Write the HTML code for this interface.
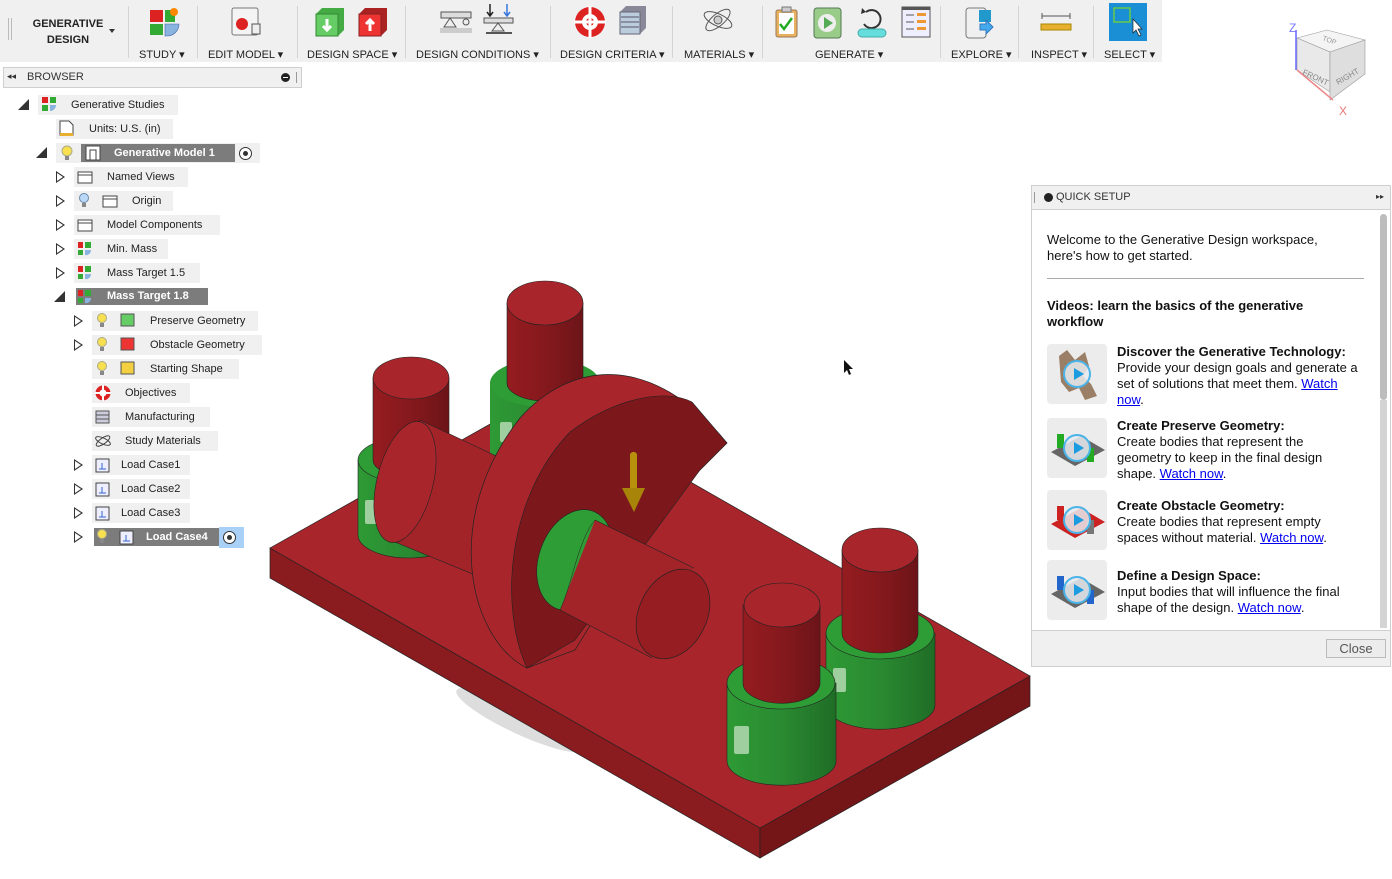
<!DOCTYPE html>
<html><head><meta charset="utf-8">
<style>
*{margin:0;padding:0;box-sizing:border-box}
body{width:1392px;height:879px;background:#fff;font-family:"Liberation Sans",sans-serif;position:relative;overflow:hidden;color:#222}
.abs{position:absolute}
#tb{left:0;top:0;width:1162px;height:62px;background:#f0f0f0}
.lbl{position:absolute;top:48px;font-size:11px;color:#222;white-space:nowrap}
.sep{position:absolute;top:6px;width:1px;height:52px;background:#d4d4d4}
.row{position:absolute;height:20px;background:#f0f0f0;font-size:11px;line-height:20px;color:#222;white-space:nowrap}
.sel{background:#7c7c7c;color:#fff;font-weight:bold}
.tri{position:absolute;width:0;height:0;border-top:6px solid transparent;border-bottom:6px solid transparent;border-left:9px solid #333}
.tri i{position:absolute;left:-8px;top:-4px;border-top:4px solid transparent;border-bottom:4px solid transparent;border-left:6px solid #fff}
.dn{position:absolute;width:0;height:0;border-left:11px solid transparent;border-bottom:11px solid #333}
#qs{left:1031px;top:185px;width:360px;height:482px;border:1px solid #cfcfcf;background:#fff}
#qs p{font-size:13px;line-height:16px;position:absolute;left:15px;color:#111}
a{color:#0000ee;text-decoration:underline}
.th{position:absolute;left:15px;width:60px;height:60px;background:#ececec;border-radius:4px}
.play{position:absolute;left:16px;top:16px;width:28px;height:28px;border-radius:50%;background:rgba(230,235,240,.85);border:2px solid #4ab3e8}
.play:after{content:"";position:absolute;left:9px;top:6px;border-top:6px solid transparent;border-bottom:6px solid transparent;border-left:10px solid #1b9be0}
</style></head><body>

<div id="tb" class="abs">
  <div class="abs" style="left:8px;top:18px;width:1px;height:22px;background:#bbb"></div>
  <div class="abs" style="left:11px;top:18px;width:1px;height:22px;background:#bbb"></div>
  <div class="abs" style="left:28px;top:16px;width:80px;text-align:center;font-size:11px;font-weight:bold;line-height:16px">GENERATIVE<br>DESIGN</div>
  <div class="abs" style="left:109px;top:29px;border-left:3px solid transparent;border-right:3px solid transparent;border-top:4px solid #333"></div>
  <div class="sep" style="left:128px"></div>
  <div class="sep" style="left:197px"></div><div class="sep" style="left:297px"></div><div class="sep" style="left:405px"></div>
  <div class="sep" style="left:550px"></div><div class="sep" style="left:672px"></div><div class="sep" style="left:762px"></div>
  <div class="sep" style="left:940px"></div><div class="sep" style="left:1018px"></div><div class="sep" style="left:1093px"></div>
  <div class="lbl" style="left:139px">STUDY ▾</div>
  <div class="lbl" style="left:208px">EDIT MODEL ▾</div>
  <div class="lbl" style="left:307px">DESIGN SPACE ▾</div>
  <div class="lbl" style="left:416px">DESIGN CONDITIONS ▾</div>
  <div class="lbl" style="left:560px">DESIGN CRITERIA ▾</div>
  <div class="lbl" style="left:684px">MATERIALS ▾</div>
  <div class="lbl" style="left:815px">GENERATE ▾</div>
  <div class="lbl" style="left:951px">EXPLORE ▾</div>
  <div class="lbl" style="left:1031px">INSPECT ▾</div>
  <div class="lbl" style="left:1104px">SELECT ▾</div>
  <svg class="abs" style="left:0;top:0" width="1162" height="44">
    <rect x="150" y="10" width="13" height="12" fill="#d22"/><rect x="150" y="24" width="13" height="11" fill="#3a3"/>
    <rect x="165" y="10" width="10" height="12" fill="#3a3"/><path d="M165 24h14a12 12 0 0 1-12 12h-2z" fill="#8ab4e0" stroke="#46a" stroke-width=".6"/>
    <circle cx="174" cy="12" r="4" fill="#f80"/>
    <rect x="232" y="8" width="26" height="27" rx="2" fill="#f4f4f4" stroke="#777"/><circle cx="242" cy="24" r="6" fill="#d22"/><rect x="252" y="24" width="8" height="10" fill="#eee" stroke="#555"/>
    <path d="M316 14l6-6h22v22l-6 6h-22z" fill="#4a4"/><rect x="316" y="14" width="22" height="22" fill="#6c6" stroke="#383"/><path d="M327 19v10m-4-3l4 4 4-4" stroke="#fff" stroke-width="3" fill="none"/>
    <path d="M359 14l6-6h22v22l-6 6h-22z" fill="#a22"/><rect x="359" y="14" width="22" height="22" fill="#e33" stroke="#822"/><path d="M370 31v-10m-4 3l4-4 4 4" stroke="#fff" stroke-width="3" fill="none"/>
    <rect x="441" y="12" width="30" height="6" fill="#ddd" stroke="#555"/><path d="M450 18l-6 9h12z" fill="#eee" stroke="#555"/><circle cx="466" cy="22" r="3" fill="#eee" stroke="#555"/><rect x="440" y="28" width="32" height="5" fill="#ccc"/>
    <path d="M490 4v12m-3-4l3 4 3-4" stroke="#222" stroke-width="1.5" fill="none"/><path d="M507 4v12m-3-4l3 4 3-4" stroke="#37d" stroke-width="1.5" fill="none"/>
    <rect x="484" y="18" width="29" height="5" fill="#ddd" stroke="#555"/><path d="M498 23l-6 8h12z" fill="#eee" stroke="#555"/><rect x="486" y="32" width="26" height="2" fill="#555"/>
    <circle cx="590" cy="22" r="15" fill="#d22"/><circle cx="590" cy="22" r="8" fill="#fff"/><circle cx="590" cy="22" r="4" fill="#d22"/>
    <path d="M590 6v32M574 22h32" stroke="#fff" stroke-width="3"/>
    <path d="M620 12l6-6h20v22l-6 6h-20z" fill="#889"/><rect x="620" y="12" width="20" height="22" fill="#bcd" stroke="#667"/><path d="M621 17h18M621 22h18M621 27h18" stroke="#556"/>
    <ellipse cx="718" cy="20" rx="15" ry="6" fill="none" stroke="#555" transform="rotate(25 718 20)"/><ellipse cx="718" cy="20" rx="15" ry="6" fill="none" stroke="#555" transform="rotate(-40 718 20)"/><circle cx="718" cy="20" r="4" fill="#ccc" stroke="#555"/>
    <rect x="776" y="10" width="21" height="27" rx="2" fill="#e8b060" stroke="#975"/><rect x="779" y="13" width="15" height="21" fill="#fff"/><rect x="782" y="7" width="9" height="5" fill="#ccc" stroke="#777"/><path d="M780 24l4 5 8-11" stroke="#2a2" stroke-width="2.5" fill="none"/>
    <rect x="814" y="8" width="27" height="30" rx="3" fill="#9c8" stroke="#575"/><circle cx="827" cy="23" r="9" fill="#eee"/><path d="M824 17v12l9-6z" fill="#5a5"/>
    <path d="M866 12a9 9 0 1 1-2 12" stroke="#333" stroke-width="2" fill="none"/><path d="M862 8l4 4-5 2z" fill="#333"/>
    <rect x="858" y="29" width="28" height="8" rx="4" fill="#6dd" stroke="#4aa"/>
    <rect x="902" y="7" width="28" height="30" fill="#eef" stroke="#555"/><rect x="902" y="7" width="28" height="3" fill="#555"/><path d="M906 15h8M906 22h8M906 29h8" stroke="#555"/><rect x="917" y="13" width="9" height="3" fill="#e93"/><rect x="917" y="20" width="9" height="3" fill="#e93"/><rect x="917" y="27" width="9" height="3" fill="#e93"/>
    <rect x="966" y="8" width="20" height="30" rx="3" fill="#f0f0f0" stroke="#777"/><rect x="979" y="10" width="12" height="12" fill="#29c"/><path d="M980 24h6v-4l7 7-7 7v-4h-6z" fill="#4ae" stroke="#37b"/>
    <path d="M1042 16h28M1042 13v6M1070 13v6" stroke="#555"/><rect x="1041" y="24" width="30" height="6" fill="#e8b030" stroke="#a80"/>
    <rect x="1109" y="3" width="38" height="38" fill="#1a8fd6"/><rect x="1114" y="8" width="16" height="14" fill="none" stroke="#6c4" stroke-width="1.5"/><path d="M1133 19v14l3-3 3 6 2-1-3-6h4z" fill="#fff" stroke="#222" stroke-width=".7"/>
  </svg>
</div>

<div class="abs" style="left:3px;top:67px;width:299px;height:21px;background:#f0f0f0;border:1px solid #cfcfcf"></div>
<div class="abs" style="left:7px;top:71px;font-size:9px;color:#333">◂◂</div>
<div class="abs" style="left:27px;top:71px;font-size:11px;color:#333">BROWSER</div>
<div class="abs" style="left:281px;top:73px;width:9px;height:9px;border-radius:50%;background:#222"></div>
<div class="abs" style="left:283px;top:77px;width:5px;height:1px;background:#fff"></div>
<div class="abs" style="left:296px;top:72px;width:1px;height:11px;background:#999"></div>

<div class="dn" style="left:18px;top:99px"></div>
<div class="row" style="left:38px;top:95px;width:140px;padding-left:33px">Generative Studies</div>
<svg class="abs" style="left:42px;top:97px" width="15" height="15"><rect x="0" y="0" width="6" height="6" fill="#d22"/><rect x="0" y="8" width="6" height="6" fill="#3a3"/><rect x="8" y="0" width="6" height="6" fill="#3a3"/><path d="M8 8h6a6 6 0 0 1-6 6z" fill="#8ab4e0"/></svg>

<div class="row" style="left:56px;top:119px;width:117px;padding-left:33px">Units: U.S. (in)</div>
<svg class="abs" style="left:59px;top:120px" width="16" height="17"><path d="M1 1h9l4 4v10h-13z" fill="#fff" stroke="#444"/><rect x="1" y="13" width="13" height="3" fill="#e8b030"/></svg>

<div class="dn" style="left:36px;top:147px"></div>
<div class="row" style="left:56px;top:143px;width:204px;background:#f0f0f0"></div>
<div class="row sel" style="left:81px;top:144px;width:154px;height:18px;line-height:18px;padding-left:33px">Generative Model 1</div>
<svg class="abs" style="left:60px;top:145px" width="14" height="16"><circle cx="7" cy="6" r="5" fill="#f8e050" stroke="#aa8"/><rect x="5" y="11" width="4" height="4" fill="#888"/></svg>
<svg class="abs" style="left:85px;top:145px" width="16" height="16"><rect x="1" y="1" width="14" height="14" fill="#fff" stroke="#444"/><path d="M5 15v-10h6v10" fill="none" stroke="#444"/></svg>
<svg class="abs" style="left:238px;top:146px" width="15" height="15"><circle cx="7.5" cy="7.5" r="6" fill="#fff" stroke="#333"/><circle cx="7.5" cy="7.5" r="2.5" fill="#333"/></svg>

<div class="tri" style="left:56px;top:171px"><i></i></div><div class="row" style="left:74px;top:167px;width:114px;padding-left:33px">Named Views</div>
<div class="tri" style="left:56px;top:195px"><i></i></div><div class="row" style="left:74px;top:191px;width:99px;padding-left:58px">Origin</div>
<div class="tri" style="left:56px;top:219px"><i></i></div><div class="row" style="left:74px;top:215px;width:146px;padding-left:33px">Model Components</div>
<div class="tri" style="left:56px;top:243px"><i></i></div><div class="row" style="left:74px;top:239px;width:94px;padding-left:33px">Min. Mass</div>
<div class="tri" style="left:56px;top:267px"><i></i></div><div class="row" style="left:74px;top:263px;width:126px;padding-left:33px">Mass Target 1.5</div>
<div class="dn" style="left:54px;top:291px"></div><div class="row sel" style="left:76px;top:288px;width:132px;height:17px;line-height:17px;padding-left:31px">Mass Target 1.8</div>
<svg class="abs" style="left:76px;top:168px" width="200" height="140">
  <rect x="2" y="4" width="14" height="11" fill="#fff" stroke="#444"/><path d="M2 7h14" stroke="#444"/>
  <rect x="27" y="28" width="14" height="11" fill="#fff" stroke="#444"/><path d="M27 31h14" stroke="#444"/>
  <circle cx="8" cy="30" r="4.5" fill="#bcd8f8" stroke="#68a"/><rect x="6" y="35" width="4" height="4" fill="#888"/>
  <rect x="2" y="52" width="14" height="11" fill="#fff" stroke="#444"/><path d="M2 55h14" stroke="#444"/>
  <g><rect x="2" y="74" width="5" height="6" fill="#d22"/><rect x="2" y="82" width="5" height="5" fill="#3a3"/><rect x="9" y="74" width="6" height="6" fill="#3a3"/><path d="M9 82h6a5 5 0 0 1-6 5z" fill="#8ab4e0"/></g>
  <g transform="translate(0,24)"><rect x="2" y="74" width="5" height="6" fill="#d22"/><rect x="2" y="82" width="5" height="5" fill="#3a3"/><rect x="9" y="74" width="6" height="6" fill="#3a3"/><path d="M9 82h6a5 5 0 0 1-6 5z" fill="#8ab4e0"/></g>
  <g transform="translate(0,48)"><rect x="2" y="74" width="5" height="6" fill="#d22"/><rect x="2" y="82" width="5" height="5" fill="#3a3"/><rect x="9" y="74" width="6" height="6" fill="#3a3"/><path d="M9 82h6a5 5 0 0 1-6 5z" fill="#8ab4e0"/></g>
</svg>

<div class="tri" style="left:74px;top:315px"><i></i></div><div class="row" style="left:92px;top:311px;width:166px;padding-left:58px">Preserve Geometry</div>
<div class="tri" style="left:74px;top:339px"><i></i></div><div class="row" style="left:92px;top:335px;width:170px;padding-left:58px">Obstacle Geometry</div>
<div class="row" style="left:92px;top:359px;width:147px;padding-left:58px">Starting Shape</div>
<div class="row" style="left:92px;top:383px;width:98px;padding-left:33px">Objectives</div>
<div class="row" style="left:92px;top:407px;width:118px;padding-left:33px">Manufacturing</div>
<div class="row" style="left:92px;top:431px;width:126px;padding-left:33px">Study Materials</div>
<div class="tri" style="left:74px;top:459px"><i></i></div><div class="row" style="left:92px;top:455px;width:98px;padding-left:29px">Load Case1</div>
<div class="tri" style="left:74px;top:483px"><i></i></div><div class="row" style="left:92px;top:479px;width:98px;padding-left:29px">Load Case2</div>
<div class="tri" style="left:74px;top:507px"><i></i></div><div class="row" style="left:92px;top:503px;width:98px;padding-left:29px">Load Case3</div>
<div class="tri" style="left:74px;top:531px"><i></i></div><div class="row sel" style="left:94px;top:528px;width:125px;height:18px;line-height:18px;padding-left:52px">Load Case4</div>
<div class="abs" style="left:219px;top:527px;width:25px;height:21px;background:#a9d1f7"></div>
<svg class="abs" style="left:222px;top:530px" width="15" height="15"><circle cx="7.5" cy="7.5" r="6" fill="#fff" stroke="#333"/><circle cx="7.5" cy="7.5" r="2.5" fill="#333"/></svg>
<svg class="abs" style="left:90px;top:310px" width="60" height="240">
  <g fill="#f8e050" stroke="#aa8"><circle cx="12" cy="8" r="4.5"/><circle cx="12" cy="32" r="4.5"/><circle cx="12" cy="56" r="4.5"/><circle cx="12" cy="224" r="4.5"/></g>
  <g fill="#888"><rect x="10" y="13" width="4" height="4"/><rect x="10" y="37" width="4" height="4"/><rect x="10" y="61" width="4" height="4"/><rect x="10" y="229" width="4" height="4"/></g>
  <rect x="31" y="4" width="13" height="12" fill="#6c6" stroke="#555"/><rect x="31" y="28" width="13" height="12" fill="#e33" stroke="#555"/><rect x="31" y="52" width="13" height="12" fill="#f3d040" stroke="#555"/>
  <circle cx="13" cy="83" r="7.5" fill="#d22"/><circle cx="13" cy="83" r="3.5" fill="#fff"/><circle cx="13" cy="83" r="1.5" fill="#d22"/><path d="M13 75v16M5 83h16" stroke="#fff" stroke-width="2"/>
  <rect x="6" y="101" width="13" height="12" fill="#ccd" stroke="#555"/><path d="M6 105h13M6 109h13" stroke="#555"/>
  <ellipse cx="13" cy="131" rx="8" ry="3" fill="none" stroke="#444" transform="rotate(25 13 131)"/><ellipse cx="13" cy="131" rx="8" ry="3" fill="none" stroke="#444" transform="rotate(-35 13 131)"/>
  <g fill="#eef" stroke="#444"><rect x="6" y="149" width="13" height="13"/><rect x="6" y="173" width="13" height="13"/><rect x="6" y="197" width="13" height="13"/><rect x="30" y="221" width="13" height="13"/></g>
  <g stroke="#36c"><path d="M12 153v6M9 159h7"/><path d="M12 177v6M9 183h7"/><path d="M12 201v6M9 207h7"/><path d="M36 225v6M33 231h7"/></g>
</svg>

<svg class="abs" style="left:0;top:0" width="1392" height="879">
  <defs>
    <linearGradient id="rc" x1="0" x2="1"><stop offset="0" stop-color="#951c20"/><stop offset=".5" stop-color="#85191d"/><stop offset="1" stop-color="#6c1418"/></linearGradient>
    <linearGradient id="gc" x1="0" x2="1"><stop offset="0" stop-color="#2e9a35"/><stop offset=".5" stop-color="#2a8a31"/><stop offset="1" stop-color="#1f6d26"/></linearGradient>
  </defs>
  <ellipse cx="520" cy="720" rx="70" ry="14" fill="#ddd" transform="rotate(25 520 720)"/>
  <path d="M270 548L760 828L760 858L270 578Z" fill="#8a1b1f" stroke="#222" stroke-width=".7"/>
  <path d="M760 828L1030 676L1030 706L760 858Z" fill="#741518" stroke="#222" stroke-width=".7"/>
  <path d="M270 548L540 396L1030 676L760 828Z" fill="#a8262b" stroke="#222" stroke-width=".7"/>
  <!-- back cylinder -->
  <path d="M490 383v80a55 24 0 0 0 110 0v-80z" fill="url(#gc)"/>
  <ellipse cx="545" cy="383" rx="55" ry="24" fill="#2f9d36"/>
  <path d="M507 303v80a38 18 0 0 0 76 0v-80z" fill="url(#rc)" stroke="#222" stroke-width=".6"/>
  <ellipse cx="545" cy="303" rx="38" ry="22" fill="#a8262b" stroke="#222" stroke-width=".6"/>
  <rect x="500" y="422" width="12" height="20" rx="2" fill="#9fcf9f"/>
  <!-- left cylinder -->
  <path d="M358 460v75a51 23 0 0 0 102 0v-75z" fill="url(#gc)" stroke="#222" stroke-width=".6"/>
  <ellipse cx="409" cy="460" rx="51" ry="23" fill="#2f9d36" stroke="#222" stroke-width=".6"/>
  <path d="M373 378v82a38 17 0 0 0 76 0v-82z" fill="url(#rc)" stroke="#222" stroke-width=".6"/>
  <ellipse cx="411" cy="378" rx="38" ry="21" fill="#a8262b" stroke="#222" stroke-width=".6"/>
  <rect x="365" y="500" width="14" height="24" rx="2" fill="#9fcf9f"/>
  <!-- left shaft -->
  <path d="M420 420L600 505L560 610L390 540Z" fill="#a22429" stroke="#222" stroke-width=".6"/>
  <ellipse cx="405" cy="482" rx="28" ry="62" fill="#a8262b" stroke="#222" stroke-width=".6" transform="rotate(14 405 482)"/>
  <!-- disk rim -->
  <path d="M527 668C470 640 440 520 520 418C570 362 650 350 727 443L700 470L655 520L575 650Z" fill="#a8262b" stroke="#222" stroke-width=".7"/>
  <!-- disk face -->
  <path d="M527 668C500 610 505 500 570 432C615 398 665 388 692 402L727 443L700 470L575 640Z" fill="#7c181c" stroke="#222" stroke-width=".6"/>
  <!-- green ring + right shaft -->
  <ellipse cx="575" cy="560" rx="36" ry="52" fill="#2f9d36" stroke="#222" stroke-width=".6" transform="rotate(20 575 560)"/>
  <path d="M595 520L694 568L652 658L560 610Z" fill="#a22429"/>
  <path d="M595 520L694 568M560 610L652 658" stroke="#222" stroke-width=".6"/>
  <path d="M595 520C578 540 572 585 560 610" fill="none" stroke="#222" stroke-width=".5"/>
  <ellipse cx="673" cy="614" rx="34" ry="47" fill="#961d22" stroke="#222" stroke-width=".7" transform="rotate(26 673 614)"/>
  <!-- arrow -->
  <rect x="630" y="452" width="7" height="40" rx="3" fill="#b8900c"/>
  <path d="M622 488h23l-11 24z" fill="#a88408"/>
  <!-- right back cylinder -->
  <path d="M826 633v72a54 24 0 0 0 109 0v-72z" fill="url(#gc)" stroke="#222" stroke-width=".6"/>
  <ellipse cx="880" cy="633" rx="54" ry="26" fill="#2f9d36" stroke="#222" stroke-width=".6"/>
  <path d="M842 550v83a38 20 0 0 0 76 0v-83z" fill="url(#rc)" stroke="#222" stroke-width=".6"/>
  <ellipse cx="880" cy="550" rx="38" ry="22" fill="#a8262b" stroke="#222" stroke-width=".6"/>
  <rect x="833" y="668" width="13" height="24" rx="2" fill="#9fcf9f"/>
  <!-- right front cylinder -->
  <path d="M727 683v78a54 24 0 0 0 109 0v-78z" fill="url(#gc)" stroke="#222" stroke-width=".6"/>
  <ellipse cx="781" cy="683" rx="54" ry="26" fill="#2f9d36" stroke="#222" stroke-width=".6"/>
  <path d="M743 605v78a38 20 0 0 0 77 0v-78z" fill="url(#rc)" stroke="#222" stroke-width=".6"/>
  <ellipse cx="782" cy="605" rx="38" ry="22" fill="#a8262b" stroke="#222" stroke-width=".6"/>
  <rect x="734" y="726" width="15" height="28" rx="2" fill="#9fcf9f"/>
  <path d="M844 360v13l3-3 2 5 2-1-2-5h4z" fill="#111"/>
  <!-- view cube -->
  <path d="M1297 38l30-8 38 10-35 12z" fill="#f4f4f4" stroke="#999" stroke-width=".6"/>
  <path d="M1297 38l33 14v40l-33-22z" fill="#e9e9e9" stroke="#999" stroke-width=".6"/>
  <path d="M1330 52l35-12v34l-35 26z" fill="#dedede" stroke="#999" stroke-width=".6"/>
  <path d="M1296 30v40" stroke="#66f" stroke-width="1.5"/><path d="M1297 70l36 30" stroke="#e88" stroke-width="1.5"/>
  <text x="1289" y="32" font-size="12" fill="#77f" font-family="Liberation Sans">Z</text>
  <text x="1339" y="115" font-size="12" fill="#e77" font-family="Liberation Sans">X</text>
  <text x="1302" y="74" font-size="8" fill="#888" font-family="Liberation Sans" transform="rotate(25 1302 74)">FRONT</text>
  <text x="1338" y="85" font-size="8" fill="#888" font-family="Liberation Sans" transform="rotate(-30 1338 85)">RIGHT</text>
  <text x="1322" y="40" font-size="7" fill="#999" font-family="Liberation Sans" transform="rotate(20 1322 40)">TOP</text>
</svg>

<div id="qs" class="abs">
  <div class="abs" style="left:0;top:0;width:358px;height:24px;background:#f0f0f0;border-bottom:1px solid #cfcfcf"></div>
  <div class="abs" style="left:2px;top:6px;width:1px;height:11px;background:#999"></div>
  <div class="abs" style="left:12px;top:7px;width:9px;height:9px;border-radius:50%;background:#222"></div>
  <div class="abs" style="left:24px;top:5px;font-size:11px;color:#333">QUICK SETUP</div>
  <div class="abs" style="left:344px;top:6px;font-size:8px;color:#333">▸▸</div>
  <div class="abs" style="left:348px;top:28px;width:7px;height:186px;background:#bdbdbd;border-radius:4px"></div>
  <div class="abs" style="left:348px;top:214px;width:7px;height:228px;background:#d4d4d4"></div>
  <p style="top:46px;width:295px">Welcome to the Generative Design workspace, here's how to get started.</p>
  <div class="abs" style="left:15px;top:92px;width:317px;height:1px;background:#aaa"></div>
  <p style="top:112px;width:285px;font-weight:bold">Videos: learn the basics of the generative workflow</p>
  <div class="th" style="top:158px"><svg width="60" height="60"><path d="M12 12l8-6 8 10 10-8 4 14-6 10 8 8 6 12-12 4-6-12-10 4-8-10z" fill="#9a7f66"/></svg><div class="play"></div></div>
  <p style="top:158px;left:85px;width:248px"><b>Discover the Generative Technology:</b><br>Provide your design goals and generate a set of solutions that meet them. <a>Watch now</a>.</p>
  <div class="th" style="top:232px"><svg width="60" height="60"><path d="M4 34l30-16 24 14-30 16z" fill="#666"/><rect x="10" y="16" width="7" height="14" fill="#2a2"/><rect x="40" y="30" width="7" height="14" fill="#2a2"/></svg><div class="play"></div></div>
  <p style="top:232px;left:85px;width:232px"><b>Create Preserve Geometry:</b><br>Create bodies that represent the geometry to keep in the final design shape. <a>Watch now</a>.</p>
  <div class="th" style="top:304px"><svg width="60" height="60"><path d="M4 34l30-16 24 14-30 16z" fill="#c22"/><rect x="10" y="16" width="7" height="14" fill="#c22"/><rect x="40" y="30" width="7" height="14" fill="#777"/></svg><div class="play"></div></div>
  <p style="top:312px;left:85px;width:232px"><b>Create Obstacle Geometry:</b><br>Create bodies that represent empty spaces without material. <a>Watch now</a>.</p>
  <div class="th" style="top:374px"><svg width="60" height="60"><path d="M4 34l30-16 24 14-30 16z" fill="#666"/><rect x="10" y="16" width="7" height="14" fill="#26c"/><rect x="40" y="30" width="7" height="14" fill="#26c"/></svg><div class="play"></div></div>
  <p style="top:382px;left:85px;width:250px"><b>Define a Design Space:</b><br>Input bodies that will influence the final shape of the design. <a>Watch now</a>.</p>
  <div class="abs" style="left:0;top:444px;width:358px;height:36px;background:#f0f0f0;border-top:1px solid #cfcfcf"></div>
  <div class="abs" style="left:294px;top:453px;width:60px;height:19px;border:1px solid #bbb;background:#ececec;font-size:13px;line-height:17px;text-align:center;color:#555">Close</div>
</div>
</body></html>
